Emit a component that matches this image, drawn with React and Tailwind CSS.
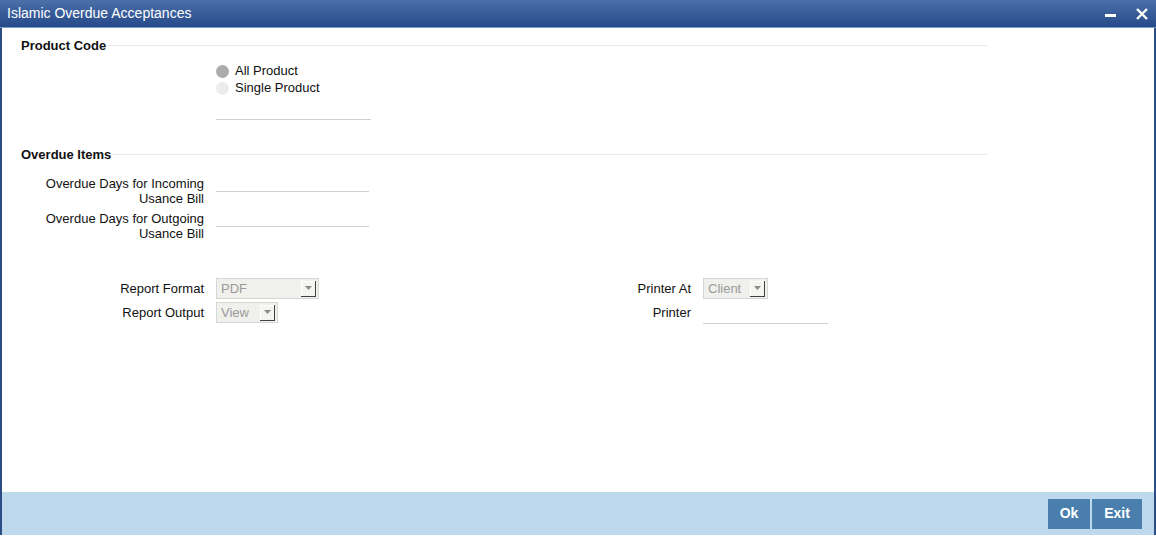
import React from "react";

const Select = ({ value, width }) => (
  <div
    className={`flex h-[21px] items-center justify-between border border-[#d6d6d2] bg-[#f0f0ec] pl-[4px] pr-[2px] ${width}`}
  >
    <span className="text-[13px] text-[#9a9a9a]">{value}</span>
    <span className="flex h-[16px] w-[15px] items-center justify-center border-b border-r border-b-[#404040] border-r-[#404040] bg-[#f4f4f2] shadow-[inset_1px_1px_0_#ffffff]">
      <svg width="7" height="4" viewBox="0 0 7 4">
        <path d="M0 0h7L3.5 4z" fill="#8a8a8a" />
      </svg>
    </span>
  </div>
);

const Section = ({ title }) => (
  <div className="flex w-[966px] items-center">
    <span className="text-[13px] font-bold text-[#111]">{title}</span>
    <div className="ml-[1px] h-px flex-1 bg-[#e8e8e8]" />
  </div>
);

const App = () => {
  return (
    <div
      className="flex h-[541px] w-[1156px] flex-col bg-white"
      style={{ fontFamily: '"Liberation Sans", Arial, sans-serif' }}
    >
      <div className="flex h-[535px] flex-col border-x-[2px] border-l-[#2c4c86] border-r-[#2c4c86]">
        {/* title bar */}
        <div className="-mx-[2px] flex h-[28px] items-center justify-between border-b border-b-[#7f9cc4] bg-gradient-to-b from-[#4b6fa8] to-[#264a8a] pl-[7px] pr-[8px]">
          <span className="text-[14px] text-white">Islamic Overdue Acceptances</span>
          <div className="flex items-center gap-[20px]">
            <svg width="11" height="12" viewBox="0 0 11 12">
              <rect x="0" y="6" width="11" height="3" fill="#fff" />
            </svg>
            <svg width="12" height="12" viewBox="0 0 12 12">
              <path d="M1 1L11 11M11 1L1 11" stroke="#fff" strokeWidth="2.4" />
            </svg>
          </div>
        </div>

        {/* body */}
        <div className="flex flex-1 flex-col pl-[19px] pt-[8px]">
          <Section title="Product Code" />
          <div className="ml-[195px] mt-[7px] flex flex-col">
            <label className="flex h-[17px] items-center gap-[6px]">
              <span className="h-[13px] w-[13px] rounded-full bg-[#ababab]" />
              <span className="text-[13px] text-[#111]">All Product</span>
            </label>
            <label className="flex h-[17px] items-center gap-[6px]">
              <span className="h-[13px] w-[13px] rounded-full bg-[#ececec]" />
              <span className="text-[13px] text-[#111]">Single Product</span>
            </label>
            <div className="mt-[22px] h-px w-[155px] bg-[#cfcfcf]" />
          </div>

          <div className="mt-[25px]">
            <Section title="Overdue Items" />
          </div>
          <div className="mt-[12px] flex flex-col gap-[5px]">
            <div className="flex items-start">
              <div className="w-[183px] text-right text-[13px] leading-[15px] text-[#111]">
                Overdue Days for Incoming
                <br />
                Usance Bill
              </div>
              <div className="ml-[12px] mt-[15px] h-px w-[153px] bg-[#cfcfcf]" />
            </div>
            <div className="flex items-start">
              <div className="w-[183px] text-right text-[13px] leading-[15px] text-[#111]">
                Overdue Days for Outgoing
                <br />
                Usance Bill
              </div>
              <div className="ml-[12px] mt-[15px] h-px w-[153px] bg-[#cfcfcf]" />
            </div>
          </div>

          <div className="mt-[37px] flex">
            <div className="flex flex-col gap-[3px]">
              <div className="flex items-center">
                <span className="w-[183px] text-right text-[13px] text-[#111]">Report Format</span>
                <div className="ml-[12px]">
                  <Select value="PDF" width="w-[103px]" />
                </div>
              </div>
              <div className="flex items-center">
                <span className="w-[183px] text-right text-[13px] text-[#111]">Report Output</span>
                <div className="ml-[12px]">
                  <Select value="View" width="w-[62px]" />
                </div>
              </div>
            </div>
            <div className="ml-[185px] flex flex-col gap-[3px]">
              <div className="flex items-center">
                <span className="w-[187px] text-right text-[13px] text-[#111]">Printer At</span>
                <div className="ml-[12px]">
                  <Select value="Client" width="w-[65px]" />
                </div>
              </div>
              <div className="flex h-[21px] items-center">
                <span className="w-[187px] text-right text-[13px] text-[#111]">Printer</span>
                <div className="ml-[12px] mt-[21px] h-px w-[125px] bg-[#cfcfcf]" />
              </div>
            </div>
          </div>
        </div>

        {/* footer */}
        <div className="flex h-[43px] items-center justify-end gap-[2px] bg-[#bed8ec] pr-[12px]">
          <button className="h-[30px] w-[42px] bg-[#4a7fad] text-[14px] font-bold text-white">Ok</button>
          <button className="h-[30px] w-[50px] bg-[#4a7fad] text-[14px] font-bold text-white">Exit</button>
        </div>
      </div>
    </div>
  );
};

export default App;
